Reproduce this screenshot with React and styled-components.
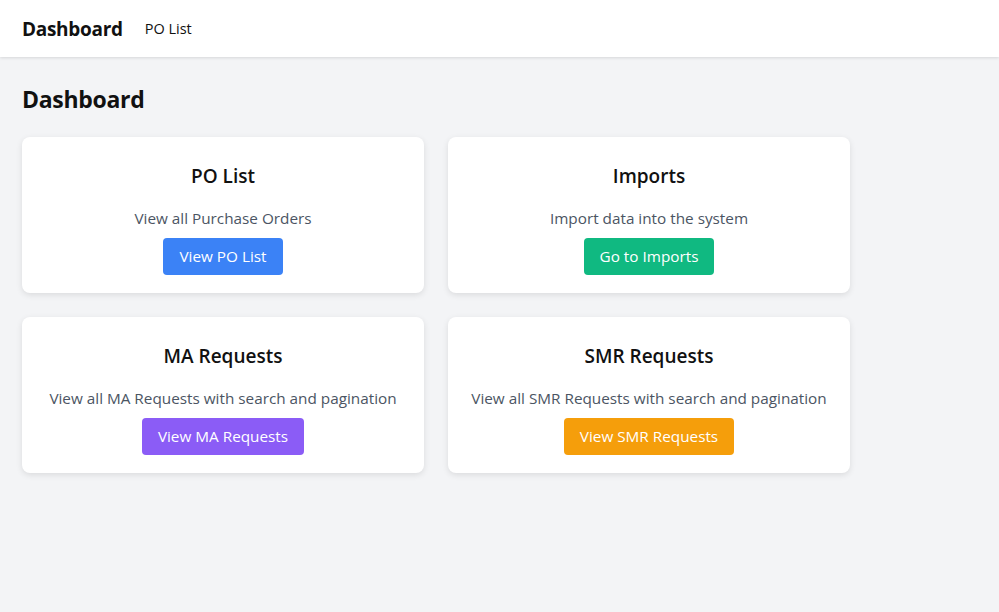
import styled, { createGlobalStyle } from "styled-components"

const GlobalStyle = createGlobalStyle`
    body {
        margin: 0;
        background: #f3f4f6;
        font-family: "Open Sans", "Noto Sans", sans-serif;
        color: #111;
    }
`

const NavBar = styled.nav`
    height: 57px;
    box-sizing: border-box;
    background: #fff;
    display: flex;
    align-items: center;
    gap: 22px;
    padding: 0 22px;
    box-shadow: 0 1px 3px rgba(0,0,0,0.12);
`

const Brand = styled.div`
    font-size: 19px;
    font-weight: 700;
    letter-spacing: -0.3px;
`

const NavLink = styled.a`
    font-size: 14.5px;
    color: #111;
    text-decoration: none;
`

const Main = styled.main`
    padding: 26px 22px;
`

const PageTitle = styled.h1`
    font-size: 23px;
    font-weight: 700;
    margin: 0 0 22px;
    line-height: 32px;
    letter-spacing: -0.3px;
`

const Grid = styled.div`
    display: grid;
    grid-template-columns: repeat(2, 402px);
    gap: 24px;
`

const Card = styled.div`
    background: #fff;
    border-radius: 8px;
    box-shadow: 0 2px 6px rgba(0,0,0,0.1);
    padding: 25px 16px 18px;
    display: flex;
    flex-direction: column;
    align-items: center;
    text-align: center;
`

const CardTitle = styled.h2`
    font-size: 19px;
    font-weight: 600;
    line-height: 28px;
    margin: 0 0 16px;
`

const CardText = styled.p`
    font-size: 15.3px;
    line-height: 24px;
    color: #4b5563;
    margin: 0 0 8px;
`

const Button = styled.button`
    background: ${p => p.color};
    color: #fff;
    border: none;
    border-radius: 4px;
    font-family: inherit;
    font-size: 15.3px;
    line-height: 24px;
    padding: 6px 16px 7px;
    cursor: pointer;
`

const cards = [
    { title: "PO List", text: "View all Purchase Orders", button: "View PO List", color: "#3b82f6" },
    { title: "Imports", text: "Import data into the system", button: "Go to Imports", color: "#10b981" },
    { title: "MA Requests", text: "View all MA Requests with search and pagination", button: "View MA Requests", color: "#8b5cf6" },
    { title: "SMR Requests", text: "View all SMR Requests with search and pagination", button: "View SMR Requests", color: "#f59e0b" },
]

const App = () => {
    return (
        <>
            <GlobalStyle />
            <NavBar>
                <Brand>Dashboard</Brand>
                <NavLink href="#">PO List</NavLink>
            </NavBar>
            <Main>
                <PageTitle>Dashboard</PageTitle>
                <Grid>
                    {cards.map(c => (
                        <Card key={c.title}>
                            <CardTitle>{c.title}</CardTitle>
                            <CardText>{c.text}</CardText>
                            <Button color={c.color}>{c.button}</Button>
                        </Card>
                    ))}
                </Grid>
            </Main>
        </>
    )
}

export default App
